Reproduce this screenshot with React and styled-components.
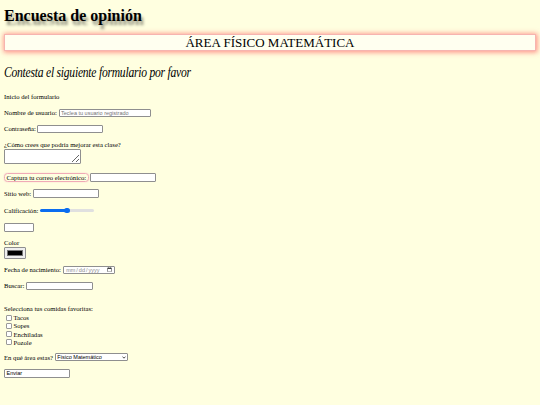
import React, { useState } from "react";
import styled, { createGlobalStyle } from "styled-components";

const GlobalStyle = createGlobalStyle`
  html, body {
    margin: 0;
    background-color: #ffffe0;
  }
  body {
    font-family: "Liberation Serif", "Times New Roman", serif;
    color: #000;
  }
`;

const Page = styled.div`
  padding: 7px 4px 10px;
`;

const Title = styled.h1`
  margin: 0;
  font-size: 16px;
  line-height: 18.4px;
  font-weight: bold;
  text-shadow: 2px 3.5px 3px rgba(0, 0, 0, 0.45);
`;

const Banner = styled.div`
  margin-top: 8.5px;
  height: 17px;
  box-sizing: border-box;
  border: 1px solid #f6b4b0;
  background-color: #fffff0;
  box-shadow: 0 0 5px 1.5px rgba(255, 100, 100, 0.7);
  text-align: center;
  font-size: 13px;
  line-height: 15px;
  text-transform: uppercase;
`;

const Subtitle = styled.h2`
  margin: 12.75px 0 0;
  font-size: 14.5px;
  line-height: 16px;
  font-style: italic;
  font-weight: normal;
  letter-spacing: -0.3px;
  white-space: nowrap;
  transform: scaleX(0.8);
  transform-origin: left center;
`;

const Form = styled.form`
  display: flex;
  flex-direction: column;
  align-items: flex-start;
  margin-top: 9.25px;
  font-size: 6.67px;
`;

const Line = styled.div`
  display: flex;
  align-items: center;
  gap: ${(p) => (p.$tight ? 0 : 1.7)}px;
  height: ${(p) => p.$h || 16}px;
  margin-top: ${(p) => p.$mt || 0}px;
`;

const Block = styled.div`
  display: flex;
  flex-direction: column;
  align-items: flex-start;
  padding: ${(p) => p.$pad || "0"};
`;

const Text = styled.label`
  line-height: ${(p) => p.$lh || 9}px;
`;

const BoxedLabel = styled.label`
  border: 1px solid #f0aab6;
  border-radius: 3.5px;
  padding: 0 1.5px;
  line-height: 7px;
  box-shadow: 0 0 1.5px #f7c4cc;
`;

const Field = styled.input`
  box-sizing: border-box;
  width: ${(p) => p.$w || 66}px;
  height: 8.5px;
  margin: 0;
  padding: 0 1.5px;
  font-family: "Liberation Sans", Arial, sans-serif;
  font-size: 5.5px;
  border: 0.5px solid #8f8f8f;
  border-radius: 1px;
  background-color: #fff;
  color: #000;
  outline: none;
  &::placeholder {
    color: #757575;
  }
  &::-webkit-calendar-picker-indicator {
    width: 5px;
    height: 5px;
    padding: 0;
    margin: 0;
  }
  &::-webkit-datetime-edit {
    padding: 0;
    color: #8a8a8a;
  }
`;

const Area = styled.textarea`
  box-sizing: border-box;
  width: 76.5px;
  height: 14.5px;
  margin: 0;
  padding: 0;
  border: 0.5px solid #8f8f8f;
  border-radius: 1px;
  background-color: #fff;
  font-size: 5.5px;
`;

const Range = styled.input`
  appearance: none;
  -webkit-appearance: none;
  width: 54px;
  height: 2.5px;
  margin: 0;
  border-radius: 2px;
  background: #e0e0e0;
  &::-webkit-slider-thumb {
    -webkit-appearance: none;
    width: 5.5px;
    height: 5.5px;
    border-radius: 50%;
    background: #0a6cf0;
    border: none;
  }
`;

const ColorPick = styled.input`
  box-sizing: border-box;
  width: 22px;
  height: 11.5px;
  margin: 0.5px 0 0;
  padding: 1.5px 2px;
  border: 0.5px solid #8f8f8f;
  border-radius: 1px;
  background-color: #efefef;
  &::-webkit-color-swatch-wrapper {
    padding: 0;
  }
  &::-webkit-color-swatch {
    border: 0.5px solid #777;
    border-radius: 0;
  }
`;

const Check = styled.input`
  appearance: none;
  -webkit-appearance: none;
  box-sizing: border-box;
  width: 6px;
  height: 6px;
  margin: 0 1.5px 0 2px;
  border: 0.5px solid #9a9a9a;
  border-radius: 1px;
  background-color: #fff;
`;

const SelectWrap = styled.span`
  position: relative;
  display: inline-flex;
`;

const Select = styled.select`
  appearance: none;
  -webkit-appearance: none;
  box-sizing: border-box;
  width: 73.5px;
  height: 8px;
  margin: 0;
  padding: 0 6px 0 1.5px;
  font-family: "Liberation Sans", Arial, sans-serif;
  font-size: 5.5px;
  line-height: 7px;
  border: 0.5px solid #8f8f8f;
  border-radius: 1px;
  background-color: #fff;
  color: #000;
`;

const Chevron = styled.svg`
  position: absolute;
  right: 2.5px;
  top: 2.5px;
  width: 4px;
  height: 3px;
  pointer-events: none;
`;

const Submit = styled.input`
  box-sizing: border-box;
  width: 66px;
  height: 9px;
  margin: 0;
  padding: 0 1.5px;
  text-align: left;
  font-family: "Liberation Sans", Arial, sans-serif;
  font-size: 5.5px;
  border: 0.5px solid #8f8f8f;
  border-radius: 1px;
  background-color: #fff;
  color: #000;
`;

const comidas = ["Tacos", "Sopes", "Enchiladas", "Pozole"];

const App = () => {
  const [nota, setNota] = useState(50);

  return (
    <Page>
      <GlobalStyle />
      <Title>Encuesta de opinión</Title>
      <Banner>Área Físico Matemática</Banner>
      <Subtitle>Contesta el siguiente formulario por favor</Subtitle>

      <Form onSubmit={(e) => e.preventDefault()}>
        <Line>
          <Text>Inicio del formulario</Text>
        </Line>
        <Line>
          <Text>Nombre de usuario:</Text>
          <Field $w={92.5} type="text" placeholder="Teclea tu usuario registrado" />
        </Line>
        <Line>
          <Text>Contraseña:</Text>
          <Field type="password" />
        </Line>
        <Block $pad="3.5px 0 5.5px">
          <Text>¿Cómo crees que podría mejorar esta clase?</Text>
          <Area />
        </Block>
        <Line>
          <BoxedLabel>Captura tu correo electrónico:</BoxedLabel>
          <Field type="email" />
        </Line>
        <Line>
          <Text>Sitio web:</Text>
          <Field type="url" />
        </Line>
        <Line $h={18}>
          <Text>Calificación:</Text>
          <Range
            type="range"
            min="0"
            max="100"
            value={nota}
            onChange={(e) => setNota(e.target.value)}
            style={{
              background: `linear-gradient(to right, #0a6cf0 ${nota}%, #e0e0e0 ${nota}%)`,
            }}
          />
        </Line>
        <Line>
          <Field $w={30} type="text" />
        </Line>
        <Block $pad="2.5px 0 3px">
          <Text>Color</Text>
          <ColorPick type="color" defaultValue="#000000" />
        </Block>
        <Line>
          <Text>Fecha de nacimiento:</Text>
          <Field $w={52} type="date" />
        </Line>
        <Line>
          <Text>Buscar:</Text>
          <Field $w={66.5} type="search" />
        </Line>
        <Block $pad="11px 0 0">
          <Text $lh={8.5}>Selecciona tus comidas favoritas:</Text>
          {comidas.map((c) => (
            <Line key={c} $h={8.3} $tight>
              <Check type="checkbox" id={c} />
              <Text htmlFor={c}>{c}</Text>
            </Line>
          ))}
        </Block>
        <Line $mt={2.8}>
          <Text>En qué área estas?</Text>
          <SelectWrap>
            <Select defaultValue="fm">
              <option value="fm">Físico Matemático</option>
              <option value="qb">Químico Biológico</option>
              <option value="ea">Económico Administrativo</option>
              <option value="hs">Humanidades y Artes</option>
            </Select>
            <Chevron viewBox="0 0 8 6">
              <path d="M1 1.2 L4 4.4 L7 1.2" fill="none" stroke="#222" strokeWidth="1.6" />
            </Chevron>
          </SelectWrap>
        </Line>
        <Line>
          <Submit type="submit" value="Enviar" />
        </Line>
      </Form>
    </Page>
  );
};

export default App;
